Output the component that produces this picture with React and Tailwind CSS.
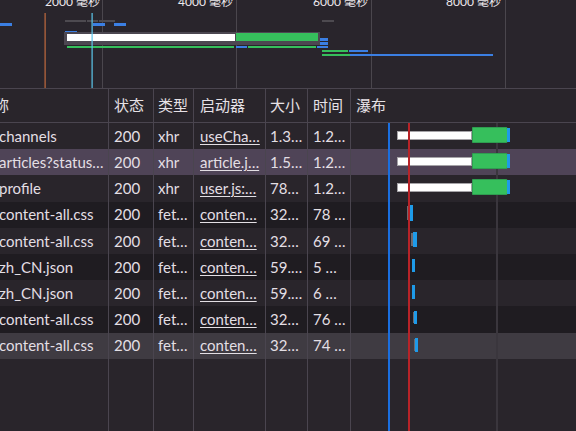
import React from 'react';

// Rows of the network log, already truncated the way the panel shows them
const rows = [
    { name: 'channels', type: 'xhr', init: 'useCha…', size: '1.3…', time: '1.2…', bg: 'bg-[#29252b]', bars: 'big' },
    { name: 'articles?status…', type: 'xhr', init: 'article.j…', size: '1.5…', time: '1.2…', bg: 'bg-[#4f4457]', bars: 'big' },
    { name: 'profile', type: 'xhr', init: 'user.js:…', size: '78…', time: '1.2…', bg: 'bg-[#29252b]', bars: 'big' },
    { name: 'content-all.css', type: 'fet…', init: 'conten…', size: '32…', time: '78 …', bg: 'bg-[#1f1c21]', bars: [56, 58, 4, 3, 16, true] },
    { name: 'content-all.css', type: 'fet…', init: 'conten…', size: '32…', time: '69 …', bg: 'bg-[#29252b]', bars: [60, 62, 4, 4, 15, true] },
    { name: 'zh_CN.json', type: 'fet…', init: 'conten…', size: '59.…', time: '5 …', bg: 'bg-[#1f1c21]', bars: [61, 61, 3, 5, 13, false] },
    { name: 'zh_CN.json', type: 'fet…', init: 'conten…', size: '59.…', time: '6 …', bg: 'bg-[#29252b]', bars: [61, 61, 3, 5, 14, false] },
    { name: 'content-all.css', type: 'fet…', init: 'conten…', size: '32…', time: '76 …', bg: 'bg-[#1f1c21]', bars: [62, 63, 3, 5, 13, true] },
    { name: 'content-all.css', type: 'fet…', init: 'conten…', size: '32…', time: '74 …', bg: 'bg-[#3f3b42]', bars: [63, 64, 3, 5, 14, true] },
];

const cols = 'grid grid-cols-[109px_45px_40px_72px_42px_43px_1fr]';
const cell = 'border-r border-[#4a454f] flex items-center overflow-hidden whitespace-nowrap';

const Overview = () => (
    <div className="relative h-[89px] border-b border-[#4a454f] bg-[#29252c] overflow-hidden shrink-0">
        <svg width="576" height="88" className="absolute left-0 top-0">
            {/* grid */}
            {[102, 236, 371, 505].map((x) => (
                <rect key={x} x={x} y="0" width="1" height="88" fill="#4a464d" />
            ))}
            {/* dim queued bars */}
            <rect x="65" y="20" width="21" height="2" fill="#4d4a50" />
            <rect x="87" y="20" width="11" height="2" fill="#4d4a50" />
            <rect x="99" y="20" width="16" height="2" fill="#4d4a50" />
            <rect x="322" y="20" width="12" height="2" fill="#4d4a50" />
            {/* small blue requests */}
            <rect x="0" y="23" width="12" height="3" fill="#3b7fe3" />
            <rect x="93" y="23" width="12" height="3" fill="#3b7fe3" />
            <rect x="114" y="23" width="12" height="3" fill="#3b7fe3" />
            <rect x="65" y="31" width="12" height="2" fill="#3b7fe3" />
            {/* highlighted request */}
            <rect x="64" y="32" width="256" height="13" fill="#4c4751" />
            <rect x="67" y="34" width="168" height="7" fill="#ffffff" />
            <rect x="236" y="33" width="82" height="8" fill="#36bf5c" />
            <rect x="320" y="38" width="8" height="3" fill="#3b7fe3" />
            <rect x="320" y="42" width="8" height="3" fill="#3b7fe3" />
            {/* other rows */}
            <rect x="67" y="46" width="167" height="2" fill="#36bf5c" />
            <rect x="236" y="46" width="11" height="2" fill="#3b7fe3" />
            <rect x="248" y="46" width="68" height="2" fill="#36bf5c" />
            <rect x="317" y="46" width="11" height="2" fill="#3b7fe3" />
            <rect x="322" y="50" width="26" height="2" fill="#36bf5c" />
            <rect x="349" y="50" width="19" height="2" fill="#3b7fe3" />
            <rect x="322" y="54" width="28" height="2" fill="#36bf5c" />
            <rect x="350" y="54" width="143" height="2" fill="#3b7fe3" />
            {/* event markers */}
            <rect x="44.5" y="13" width="1.2" height="75" fill="#c06a3e" />
            <rect x="91.5" y="13" width="1.2" height="75" fill="#5cc7ec" />
        </svg>
        {[
            ['2000 毫秒', 'right-[476px]'],
            ['4000 毫秒', 'right-[343px]'],
            ['6000 毫秒', 'right-[208px]'],
            ['8000 毫秒', 'right-[75px]'],
        ].map(([label, pos]) => (
            <span key={label} className={`absolute top-[-4px] ${pos} text-[12px] leading-[12px] text-[#eeeaee]`}>
                {label}
            </span>
        ))}
    </div>
);

const Waterfall = ({ bars }) => {
    if (bars === 'big') {
        return (
            <>
                <div className="absolute left-[46px] top-[8px] w-[75px] h-[9px] bg-white border border-[#a5a3a7]" />
                <div className="absolute left-[121px] top-[4px] w-[36px] h-[16px] bg-[#36bf5c] border border-[#2f9d50] rounded-r-[2px]" />
                <div className="absolute left-[156px] top-[5px] w-[3px] h-[14px] bg-[#1e9be9]" />
            </>
        );
    }
    const [grayLeft, blueLeft, blueW, top, h, hasGray] = bars;
    return (
        <>
            {hasGray && (
                <div className="absolute w-[3px] bg-[#6d6a70]" style={{ left: grayLeft, top: top + 1, height: h - 2 }} />
            )}
            <div className="absolute bg-[#1e9be9]" style={{ left: blueLeft, top, width: blueW, height: h }} />
        </>
    );
};

// waterfall cell: faint time grid, the request bars, then the DOMContentLoaded / load markers on top
const WaterfallCell = ({ bars }) => (
    <div className="relative">
        <div className="absolute top-0 bottom-0 left-[145px] w-[2px] bg-[#3a363d]" />
        {bars && <Waterfall bars={bars} />}
        <div className="absolute top-0 bottom-0 left-[37px] w-[1.5px] bg-[#1a6fe0]" />
        <div className="absolute top-0 bottom-0 left-[57px] w-[2px] bg-[#b82328]" />
    </div>
);

const App = () => {
    return (
        <div className="w-[576px] h-[431px] overflow-hidden flex flex-col bg-[#29252b] text-[15px] text-[#e3dfe4] font-[family-name:Lato,'Noto_Sans_CJK_SC',sans-serif]">
            <Overview />

            {/* header */}
            <div className={`${cols} h-[34px] border-b border-[#4a454f] shrink-0 text-[#e6e1e6]`}>
                <div className={cell}><span className="-ml-[21px]">名称</span></div>
                <div className={`${cell} pl-[5px]`}>状态</div>
                <div className={`${cell} pl-[4px]`}>类型</div>
                <div className={`${cell} pl-[6px]`}>启动器</div>
                <div className={`${cell} pl-[4px]`}>大小</div>
                <div className={`${cell} pl-[5px]`}>时间</div>
                <div className="flex items-center pl-[5px]">瀑布</div>
            </div>

            {/* body */}
            <div className="flex-1 flex flex-col">
                {rows.map((r, i) => (
                    <div key={i} className={`${cols} h-[26.2px] shrink-0 ${r.bg}`}>
                        <div className={cell}><span className="-ml-[1px]">{r.name}</span></div>
                        <div className={`${cell} pl-[5px]`}>200</div>
                        <div className={`${cell} pl-[4px]`}>{r.type}</div>
                        <div className={`${cell} pl-[6px]`}><span className="underline underline-offset-2">{r.init}</span></div>
                        <div className={`${cell} pl-[4px]`}>{r.size}</div>
                        <div className={`${cell} pl-[5px]`}>{r.time}</div>
                        <WaterfallCell bars={r.bars} />
                    </div>
                ))}

                {/* empty space below the log */}
                <div className={`${cols} flex-1`}>
                    <div className="border-r border-[#4a454f]" />
                    <div className="border-r border-[#4a454f]" />
                    <div className="border-r border-[#4a454f]" />
                    <div className="border-r border-[#4a454f]" />
                    <div className="border-r border-[#4a454f]" />
                    <div className="border-r border-[#4a454f]" />
                    <WaterfallCell />
                </div>
            </div>
        </div>
    );
};

export default App;
